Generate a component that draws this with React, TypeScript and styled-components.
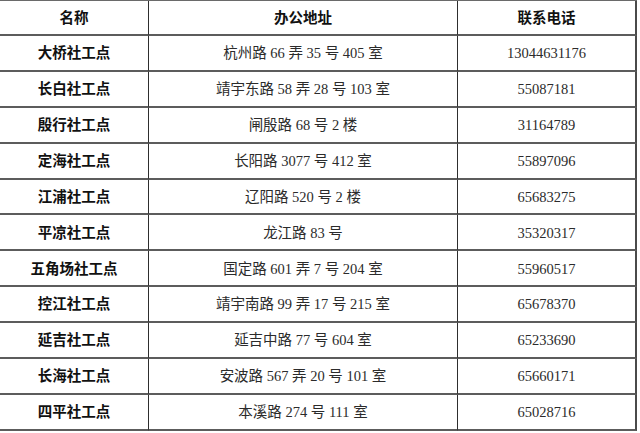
import { Fragment } from "react";
import { createGlobalStyle, styled } from "styled-components";

const GlobalStyle = createGlobalStyle`
  html, body {
    margin: 0;
    padding: 0;
    background: #ffffff;
  }
  body {
    font-family: "Liberation Serif", "Noto Sans CJK SC", serif;
  }
`;

type Station = {
  name: string;
  address: string;
  phone: string;
};

const stations: Station[] = [
  { name: "大桥社工点", address: "杭州路 66 弄 35 号 405 室", phone: "13044631176" },
  { name: "长白社工点", address: "靖宇东路 58 弄 28 号 103 室", phone: "55087181" },
  { name: "殷行社工点", address: "闸殷路 68 号 2 楼", phone: "31164789" },
  { name: "定海社工点", address: "长阳路 3077 号 412 室", phone: "55897096" },
  { name: "江浦社工点", address: "辽阳路 520 号 2 楼", phone: "65683275" },
  { name: "平凉社工点", address: "龙江路 83 号", phone: "35320317" },
  { name: "五角场社工点", address: "国定路 601 弄 7 号 204 室", phone: "55960517" },
  { name: "控江社工点", address: "靖宇南路 99 弄 17 号 215 室", phone: "65678370" },
  { name: "延吉社工点", address: "延吉中路 77 号 604 室", phone: "65233690" },
  { name: "长海社工点", address: "安波路 567 弄 20 号 101 室", phone: "65660171" },
  { name: "四平社工点", address: "本溪路 274 号 111 室", phone: "65028716" },
];

const Page = styled.div`
  width: 640px;
  height: 433px;
  overflow: hidden;
  background: #ffffff;
`;

const Grid = styled.div`
  width: 637px;
  display: grid;
  grid-template-columns: 149px 309px 179px;
  grid-template-rows: 35px;
  grid-auto-rows: 35.9px;
  border-top: 1px solid #6a6a6a;
`;

const Cell = styled.div<{ $bold?: boolean; $last?: boolean }>`
  display: flex;
  align-items: center;
  justify-content: center;
  box-sizing: border-box;
  border-bottom: 2px solid #5c5c5c;
  border-right: ${({ $last }) => ($last ? "2px solid #4a4a4a" : "1.5px solid #2e2e2e")};
  font-size: 14.5px;
  line-height: 1;
  white-space: pre;
  color: ${({ $bold }) => ($bold ? "#111111" : "#2b2b2b")};
  font-weight: ${({ $bold }) => ($bold ? 700 : 400)};
  padding-top: 1px;
`;

export default function App() {
  return (
    <Page>
      <GlobalStyle />
      <Grid>
        <Cell $bold>名称</Cell>
        <Cell $bold>办公地址</Cell>
        <Cell $bold $last>联系电话</Cell>
        {stations.map((s) => (
          <Fragment key={s.name}>
            <Cell $bold>{s.name}</Cell>
            <Cell>{s.address}</Cell>
            <Cell $last>{s.phone}</Cell>
          </Fragment>
        ))}
      </Grid>
    </Page>
  );
}
